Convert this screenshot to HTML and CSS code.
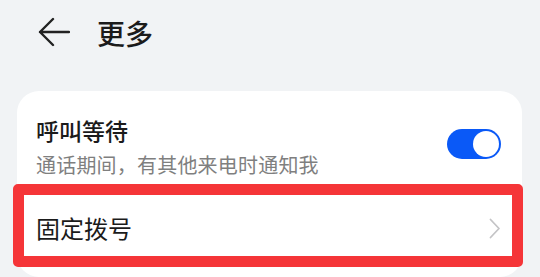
FILE: index.html
```html
<!DOCTYPE html>
<html lang="zh-CN">
<head>
<meta charset="utf-8">
<title>更多</title>
<link rel="stylesheet" href="styles.css">
</head>
<body>
<header class="topbar">
  <svg class="back" width="32" height="30" viewBox="0 0 32 30" aria-hidden="true">
    <path d="M15 2 L2 15 L15 28 M2 15 H31" fill="none" stroke="#222" stroke-width="2.4" stroke-linecap="round" stroke-linejoin="round"/>
  </svg>
  <h1 class="title">更多</h1>
</header>
<main class="card">
  <div class="row row-switch">
    <div class="texts">
      <div class="row-title">呼叫等待</div>
      <div class="row-sub">通话期间，有其他来电时通知我</div>
    </div>
    <div class="toggle"><span class="knob"></span></div>
  </div>
  <div class="row row-link">
    <div class="row-title plain">固定拨号</div>
    <svg class="chev" width="12" height="21" viewBox="0 0 12 21" aria-hidden="true">
      <path d="M1.5 1.5 L10 10.5 L1.5 19.5" fill="none" stroke="#c4c4c6" stroke-width="1.8" stroke-linecap="round" stroke-linejoin="round"/>
    </svg>
    <span class="highlight"></span>
  </div>
</main>
</body>
</html>
```
FILE: styles.css
```css
* { box-sizing: border-box; }
html, body { margin: 0; padding: 0; }
body {
  width: 540px;
  height: 277px;
  overflow: hidden;
  background: #f1f3f5;
  font-family: "Noto Sans CJK SC", "Noto Sans", sans-serif;
  color: #1b1b1b;
}
.topbar {
  height: 66px;
  display: flex;
  align-items: center;
  padding-left: 38px;
}
.back { display: block; margin-top: -3px; }
.title {
  margin: 0 0 0 27px;
  font-size: 28px;
  font-weight: 500;
  line-height: 36px;
  color: #1b1b1b;
}
.card {
  margin: 25px 18px 0 17px;
  background: #fff;
  border-radius: 22px;
  padding-bottom: 5px;
}
.row {
  display: flex;
  align-items: center;
  padding-left: 19px;
  padding-right: 21px;
}
.row-switch {
  padding-top: 25px;
  padding-bottom: 7px;
}
.texts { flex: 1; }
.row-title {
  font-size: 23px;
  line-height: 28px;
  font-weight: 500;
  color: #1b1b1b;
}
.row-title.plain { font-weight: 400; font-size: 24px; flex: 1; }
.row-sub {
  margin-top: 9px;
  font-size: 20px;
  line-height: 24px;
  color: #7f7f7f;
  letter-spacing: 0.2px;
}
.toggle {
  position: relative;
  width: 54px;
  height: 30px;
  border-radius: 15px;
  background: #0a59f7;
  margin-bottom: 5px;
}
.knob {
  position: absolute;
  top: 2px;
  right: 2px;
  width: 26px;
  height: 26px;
  border-radius: 50%;
  background: #fff;
}
.row-link {
  position: relative;
  height: 88px;
  padding-right: 21px;
}
.chev { display: block; }
.highlight {
  position: absolute;
  top: 0;
  left: -4px;
  right: -1px;
  height: 83px;
  border: 11px solid #f53538;
  border-radius: 5px;
  pointer-events: none;
}
```
